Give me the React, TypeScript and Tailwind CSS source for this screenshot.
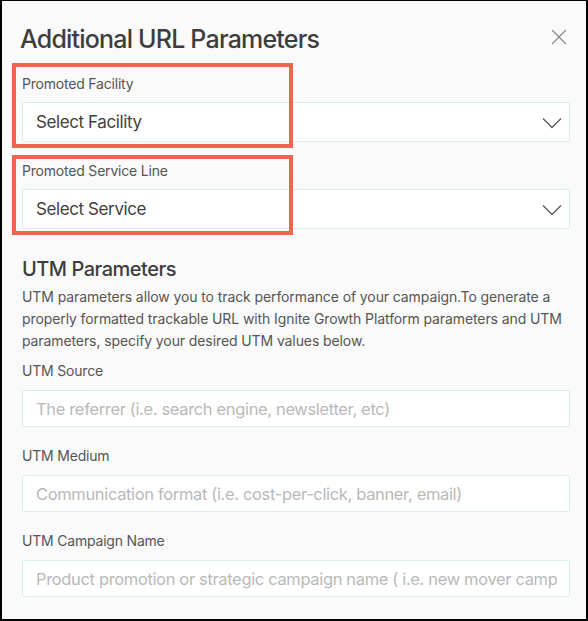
import { X } from 'lucide-react'

const font = { fontFamily: 'Inter, "Noto Sans", sans-serif' }

function Chevron() {
  return (
    <svg width="20" height="12" viewBox="0 0 20 12" fill="none" className="shrink-0">
      <path d="M1 1.5 L10 10.5 L19 1.5" stroke="#5a5a5a" strokeWidth="1.3" />
    </svg>
  )
}

function SelectField({ label, value, box }: { label: string; value: string; box: string }) {
  return (
    <div className="relative">
      <div className="h-5 text-[14px] leading-5 text-[#555] tracking-[-0.2px]">{label}</div>
      <div className="mt-2 h-10 flex items-center justify-between pl-[13px] pr-[7px] pt-[2px] bg-white border border-[#dcebf0] rounded-[2px]">
        <span className="text-[17px] text-[#3f3f3f] tracking-[-0.4px]">{value}</span>
        <Chevron />
      </div>
      <div className={`absolute left-[-10px] w-[281px] border-4 border-[#f0654e] pointer-events-none ${box}`} />
    </div>
  )
}

function TextField({ label, placeholder }: { label: string; placeholder: string }) {
  return (
    <div>
      <div className="h-5 text-[14px] leading-5 text-[#555] tracking-[-0.2px]">{label}</div>
      <div className="mt-[9px] h-[37px] flex items-center pl-[13px] pr-3 pt-[2px] bg-white border border-[#dcebf0] rounded-[2px] overflow-hidden">
        <span className="text-[16.5px] text-[#b9b9b9] whitespace-nowrap overflow-hidden tracking-[-0.35px]">{placeholder}</span>
      </div>
    </div>
  )
}

export default function App() {
  return (
    <div style={font} className="w-[588px] h-[621px] bg-[#fafafa] border-l-2 border-t border-r-2 border-b-2 border-black overflow-hidden">
      <div className="pl-[18px] pr-[14px] pt-[22px]">
        <div className="flex items-start justify-between">
          <h1 className="text-[25px] leading-8 font-medium text-[#3d3d3d] tracking-[-0.8px]">Additional URL Parameters</h1>
          <X size={26} strokeWidth={1.1} className="text-[#8a8a8a] mt-[1px]" />
        </div>
      </div>
      <div className="pl-5 pr-4 mt-[19px]">
        <SelectField label="Promoted Facility" value="Select Facility" box="top-[-11px] h-[85px]" />
        <div className="mt-[19px]">
          <SelectField label="Promoted Service Line" value="Select Service" box="top-[-6px] h-[80px]" />
        </div>
        <h2 className="mt-[26px] text-[20px] leading-7 font-medium text-[#3d3d3d] tracking-[-0.5px]">UTM Parameters</h2>
        <p className="mt-[3px] text-[14px] leading-[22px] text-[#555] tracking-[-0.1px]">
          UTM parameters allow you to track performance of your campaign.To generate a properly formatted trackable URL with Ignite Growth Platform parameters and UTM parameters, specify your desired UTM values below.
        </p>
        <div className="mt-[9px] flex flex-col gap-[19px]">
          <TextField label="UTM Source" placeholder="The referrer (i.e. search engine, newsletter, etc)" />
          <TextField label="UTM Medium" placeholder="Communication format (i.e. cost-per-click, banner, email)" />
          <TextField label="UTM Campaign Name" placeholder="Product promotion or strategic campaign name ( i.e. new mover campaign)" />
        </div>
      </div>
    </div>
  )
}
